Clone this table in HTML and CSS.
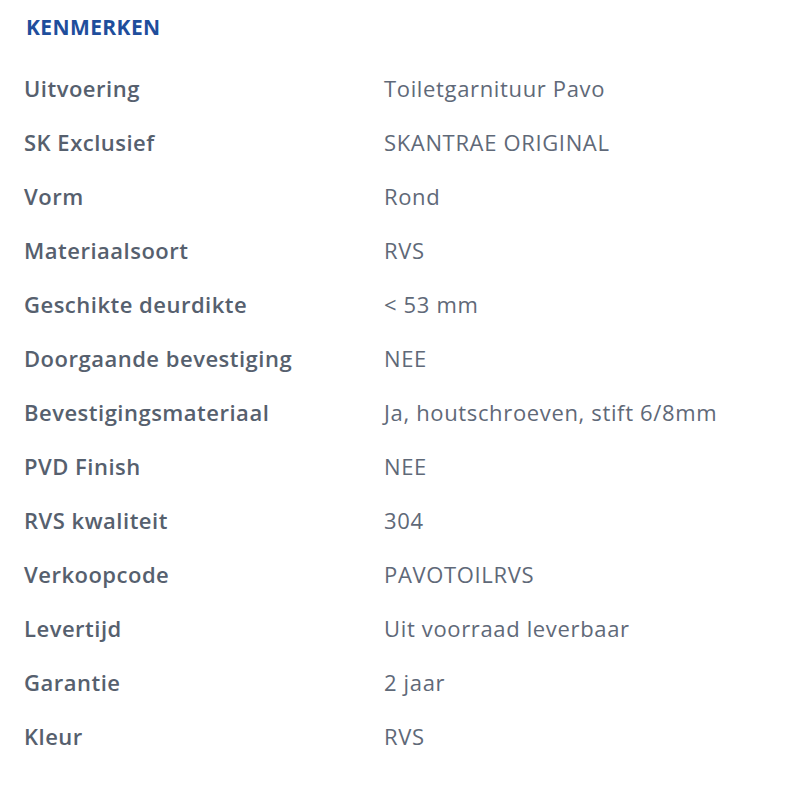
FILE: index.html
```html
<!DOCTYPE html>
<html lang="nl">
<head>
<meta charset="utf-8">
<link rel="stylesheet" href="styles.css">
</head>
<body>
<section class="specs">
  <h2 class="specs-title">KENMERKEN</h2>
  <dl class="specs-list">
    <div class="row"><dt>Uitvoering</dt><dd>Toiletgarnituur Pavo</dd></div>
    <div class="row"><dt>SK Exclusief</dt><dd>SKANTRAE ORIGINAL</dd></div>
    <div class="row"><dt>Vorm</dt><dd>Rond</dd></div>
    <div class="row"><dt>Materiaalsoort</dt><dd>RVS</dd></div>
    <div class="row"><dt>Geschikte deurdikte</dt><dd>&lt; 53 mm</dd></div>
    <div class="row"><dt>Doorgaande bevestiging</dt><dd>NEE</dd></div>
    <div class="row"><dt>Bevestigingsmateriaal</dt><dd>Ja, houtschroeven, stift 6/8mm</dd></div>
    <div class="row"><dt>PVD Finish</dt><dd>NEE</dd></div>
    <div class="row"><dt>RVS kwaliteit</dt><dd>304</dd></div>
    <div class="row"><dt>Verkoopcode</dt><dd>PAVOTOILRVS</dd></div>
    <div class="row"><dt>Levertijd</dt><dd>Uit voorraad leverbaar</dd></div>
    <div class="row"><dt>Garantie</dt><dd>2 jaar</dd></div>
    <div class="row"><dt>Kleur</dt><dd>RVS</dd></div>
  </dl>
</section>
</body>
</html>
```
FILE: styles.css
```css
html, body {
  margin: 0;
  padding: 0;
  background: #ffffff;
}
body {
  font-family: "Open Sans", "Noto Sans", sans-serif;
}
.specs {
  padding: 13px 24px 0 24px;
}
.specs-title {
  margin: 0 0 0 2px;
  font-size: 21px;
  line-height: 28px;
  font-weight: 700;
  color: #1f4e9c;
  letter-spacing: 0.4px;
}
.specs-list {
  margin: 20px 0 0 0;
  padding: 0;
}
.row {
  display: grid;
  grid-template-columns: 360px 1fr;
  height: 54px;
  align-items: center;
}
.row dt {
  margin: 0;
  font-size: 22px;
  font-weight: 600;
  color: #56606e;
  letter-spacing: 0.5px;
}
.row dd {
  margin: 0;
  font-size: 22px;
  font-weight: 400;
  color: #5f6978;
  letter-spacing: 0.65px;
}
```
